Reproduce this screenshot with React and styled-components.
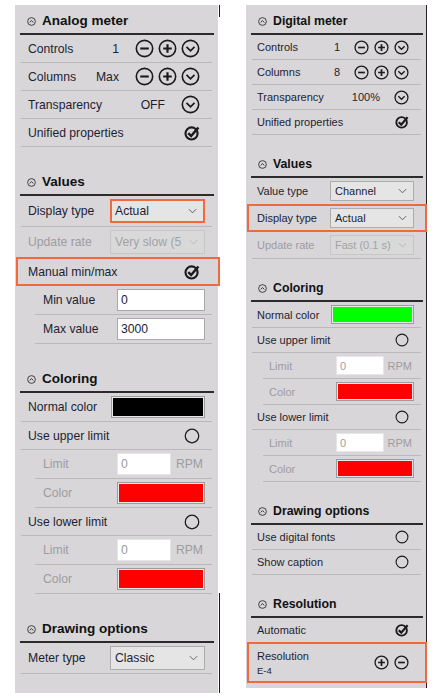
import React from 'react';
import styled, { createGlobalStyle, css } from 'styled-components';

// ---------------------------------------------------------------------------
// global
// ---------------------------------------------------------------------------
const GlobalStyle = createGlobalStyle`
  html, body {
    margin: 0;
    padding: 0;
    background: #ffffff;
  }
  body {
    font-family: "Liberation Sans", Arial, sans-serif;
    color: #1e1e32;
  }
  * { box-sizing: border-box; }
`;

const ORANGE = '#ef6b3c';
const INK = '#1a1a1a';

// ---------------------------------------------------------------------------
// layout
// ---------------------------------------------------------------------------
const Page = styled.div`
  display: flex;
  align-items: flex-start;
  gap: 28px;
  padding: 5px 0 0 15px;
`;

// sizes are kept in css variables so the compact (right) panel only swaps values
const Panel = styled.div`
  --fs: 12.2px;
  --hfs: 13.5px;
  --row: 28px;
  --pad-y: 3px;
  --pad-l: 7px;
  --pad-r: 7px;
  --ctl: 95px;
  --ctl-in: 88px;
  --ctl-h: 24px;
  --box-h: 22px;
  --limit-w: 54px;
  --icon: 19px;
  --check: 16px;
  --gap: 19px;
  --indent: 14px;
  --val-gap: 16px;

  ${(p) =>
    p.$compact &&
    css`
      --fs: 11px;
      --hfs: 12.3px;
      --row: 25px;
      --pad-y: 3px;
      --pad-l: 5px;
      --pad-r: 7px;
      --ctl: 84px;
      --ctl-in: 78px;
      --ctl-h: 20px;
      --box-h: 19px;
      --limit-w: 48px;
      --icon: 15px;
      --check: 14px;
      --gap: 13px;
      --indent: 11px;
      --val-gap: 14px;
    `}

  position: relative;
  width: ${(p) => (p.$compact ? '181px' : '203px')};
  background: #d8d6d9;
  padding: 0 ${(p) => (p.$compact ? '5px' : '6px')}
    ${(p) => (p.$compact ? '5px' : '19px')} 6px;
  font-size: var(--fs);
  border-right: ${(p) => (p.$compact ? '1px solid #222' : 'none')};

  ${(p) =>
    !p.$compact &&
    css`
      &::before,
      &::after {
        content: '';
        position: absolute;
        right: -2px;
        width: 1.5px;
        background: #1a1a1a;
      }
      &::before {
        top: 0;
        height: 12px;
      }
      &::after {
        bottom: 0;
        height: 100px;
      }
    `}
`;

const Section = styled.section`
  & + & {
    margin-top: var(--gap);
  }
`;

const Header = styled.div`
  display: flex;
  align-items: flex-end;
  gap: 6px;
  height: 30px;
  margin: 0 -2px 0 -1px;
  padding: 0 0 4px 7px;
  border-bottom: 2px solid #2b2b2b;
  font-size: var(--hfs);
  font-weight: bold;
  line-height: 16px;
  color: #111;
`;

const HeaderIconBox = styled.span`
  display: flex;
  align-items: center;
  height: 16px;
`;

const highlightBox = css`
  &::after {
    content: '';
    position: absolute;
    left: -5px;
    right: ${(p) => (p.$compact ? '-6px' : '-8px')};
    top: -1px;
    bottom: -1px;
    border: 2px solid ${ORANGE};
    pointer-events: none;
    z-index: 2;
  }
`;

const Row = styled.div`
  position: relative;
  display: flex;
  align-items: center;
  min-height: ${(p) => (p.$tall ? '40px' : 'var(--row)')};
  padding: var(--pad-y) var(--pad-r) var(--pad-y) var(--pad-l);
  margin-left: ${(p) => (p.$indent ? 'var(--indent)' : '0')};
  border-bottom: 1px solid #bab8bb;
  ${(p) => p.$highlight && highlightBox}
`;

const Label = styled.span`
  flex: 1;
  white-space: nowrap;
  color: ${(p) => (p.$muted ? '#9d9c9f' : '#1e1e32')};
  padding-left: ${(p) => (p.$indent ? '1px' : '0')};
`;

const LabelStack = styled.div`
  flex: 1;
  display: flex;
  flex-direction: column;
  gap: 3px;
  color: #1e1e32;
`;

const SubLabel = styled.span`
  font-size: 9.5px;
`;

const Value = styled.span`
  margin-right: var(--val-gap);
  white-space: nowrap;
`;

const IconGroup = styled.div`
  display: flex;
  align-items: center;
  gap: ${(p) => (p.$compact ? '5px' : '4px')};
  margin-right: 5px;
`;

const SelectBox = styled.div`
  display: flex;
  align-items: center;
  justify-content: space-between;
  width: var(--ctl);
  height: var(--ctl-h);
  padding: 0 6px 0 4px;
  background: ${(p) => (p.$disabled ? '#d9d9d9' : '#e5e5e5')};
  border: 1px solid ${(p) => (p.$disabled ? '#c6c6c6' : '#adadad')};
  color: ${(p) => (p.$disabled ? '#a3a3a6' : '#1e1e32')};
  white-space: nowrap;
  ${(p) =>
    p.$highlight &&
    css`
      border: 2px solid ${ORANGE};
      padding-left: 3px;
    `}
`;

const SelectText = styled.span``;

const TextBox = styled.div`
  display: flex;
  align-items: center;
  width: ${(p) => p.$width || 'var(--ctl-in)'};
  height: var(--box-h);
  padding-left: 3px;
  background: #ffffff;
  border: 1px solid ${(p) => (p.$muted ? '#e6e6e6' : '#a8a8a8')};
  color: ${(p) => (p.$muted ? '#9d9c9f' : '#1e1e32')};
`;

const Swatch = styled.div`
  width: ${(p) => (p.$indent ? 'var(--ctl-in)' : 'calc(var(--ctl) - 1px)')};
  height: var(--box-h);
  background: ${(p) => p.$color};
  border: 1px solid #9c9c9c;
  box-shadow: inset 0 0 0 1px #e8e8e8;
`;

const LimitGroup = styled.div`
  display: flex;
  align-items: center;
  justify-content: space-between;
  width: var(--ctl-in);
`;

const Unit = styled.span`
  color: #9d9c9f;
  padding-right: 2px;
`;

// ---------------------------------------------------------------------------
// icons
// ---------------------------------------------------------------------------
const Svg = styled.svg`
  display: block;
  width: ${(p) => p.$size || 'var(--icon)'};
  height: ${(p) => p.$h || p.$size || 'var(--icon)'};
  flex-shrink: 0;
`;

const CollapseIcon = ({ size }) => (
  <Svg viewBox="0 0 10 10" $size={size}>
    <circle cx="5" cy="5" r="4.3" fill="none" stroke="#222" strokeWidth="0.9" />
    <path d="M3 6 L5 4 L7 6" fill="none" stroke="#222" strokeWidth="1" />
  </Svg>
);

const MinusIcon = () => (
  <Svg viewBox="0 0 20 20">
    <circle cx="10" cy="10" r="8.6" fill="none" stroke={INK} strokeWidth="1.7" />
    <path d="M5.5 10 H14.5" stroke={INK} strokeWidth="2.2" />
  </Svg>
);

const PlusIcon = () => (
  <Svg viewBox="0 0 20 20">
    <circle cx="10" cy="10" r="8.6" fill="none" stroke={INK} strokeWidth="1.7" />
    <path d="M5.5 10 H14.5 M10 5.5 V14.5" stroke={INK} strokeWidth="2.3" />
  </Svg>
);

const DownIcon = () => (
  <Svg viewBox="0 0 20 20">
    <circle cx="10" cy="10" r="8.6" fill="none" stroke={INK} strokeWidth="1.7" />
    <path d="M5.8 8.2 L10 12.4 L14.2 8.2" fill="none" stroke={INK} strokeWidth="1.8" />
  </Svg>
);

const CheckIcon = () => (
  <Svg viewBox="0 0 18 18" $size="var(--check)">
    <circle cx="8.5" cy="9.5" r="6.8" fill="none" stroke={INK} strokeWidth="2.4" />
    <path d="M4.8 9.2 L8 12.4 L16.2 2.8" fill="none" stroke={INK} strokeWidth="2.8" />
  </Svg>
);

const RadioIcon = () => (
  <Svg viewBox="0 0 18 18" $size="var(--check)">
    <circle cx="9" cy="9" r="7.6" fill="none" stroke={INK} strokeWidth="1.4" />
  </Svg>
);

const SelectChevron = ({ muted }) => (
  <Svg viewBox="0 0 10 6" $size="9px" $h="6px">
    <path
      d="M1 1 L5 5 L9 1"
      fill="none"
      stroke={muted ? '#b5b5b5' : '#555'}
      strokeWidth="1"
    />
  </Svg>
);

// ---------------------------------------------------------------------------
// pieces
// ---------------------------------------------------------------------------
const SectionHeader = ({ title }) => (
  <Header>
    <HeaderIconBox>
      <CollapseIcon size="9px" />
    </HeaderIconBox>
    {title}
  </Header>
);

const Select = ({ value, disabled, highlight }) => (
  <SelectBox $disabled={disabled} $highlight={highlight}>
    <SelectText>{value}</SelectText>
    <SelectChevron muted={disabled} />
  </SelectBox>
);

const Stepper = ({ compact, withSteps = true }) => (
  <IconGroup $compact={compact}>
    {withSteps && <MinusIcon />}
    {withSteps && <PlusIcon />}
    <DownIcon />
  </IconGroup>
);

const LimitRows = () => (
  <>
    <Row $indent>
      <Label $muted $indent>Limit</Label>
      <LimitGroup>
        <TextBox $width="var(--limit-w)" $muted>0</TextBox>
        <Unit>RPM</Unit>
      </LimitGroup>
    </Row>
    <Row $indent>
      <Label $muted $indent>Color</Label>
      <Swatch $indent $color="#ff0000" />
    </Row>
  </>
);

const TopRows = ({ compact, columns, transparency }) => (
  <>
    <Row>
      <Label>Controls</Label>
      <Value>1</Value>
      <Stepper compact={compact} />
    </Row>
    <Row>
      <Label>Columns</Label>
      <Value>{columns}</Value>
      <Stepper compact={compact} />
    </Row>
    <Row>
      <Label>Transparency</Label>
      <Value>{transparency}</Value>
      <Stepper compact={compact} withSteps={false} />
    </Row>
    <Row>
      <Label>Unified properties</Label>
      <IconGroup>
        <CheckIcon />
      </IconGroup>
    </Row>
  </>
);

// ---------------------------------------------------------------------------
// panels
// ---------------------------------------------------------------------------
const AnalogPanel = () => (
  <Panel>
    <Section>
      <SectionHeader title="Analog meter" />
      <TopRows columns="Max" transparency="OFF" />
    </Section>

    <Section>
      <SectionHeader title="Values" />
      <Row>
        <Label>Display type</Label>
        <Select value="Actual" highlight />
      </Row>
      <Row>
        <Label $muted>Update rate</Label>
        <Select value="Very slow (5" disabled />
      </Row>
      <Row $highlight>
        <Label>Manual min/max</Label>
        <IconGroup>
          <CheckIcon />
        </IconGroup>
      </Row>
      <Row $indent>
        <Label $indent>Min value</Label>
        <TextBox>0</TextBox>
      </Row>
      <Row $indent>
        <Label $indent>Max value</Label>
        <TextBox>3000</TextBox>
      </Row>
    </Section>

    <Section>
      <SectionHeader title="Coloring" />
      <Row>
        <Label>Normal color</Label>
        <Swatch $color="#000000" />
      </Row>
      <Row>
        <Label>Use upper limit</Label>
        <IconGroup>
          <RadioIcon />
        </IconGroup>
      </Row>
      <LimitRows />
      <Row>
        <Label>Use lower limit</Label>
        <IconGroup>
          <RadioIcon />
        </IconGroup>
      </Row>
      <LimitRows />
    </Section>

    <Section>
      <SectionHeader title="Drawing options" />
      <Row>
        <Label>Meter type</Label>
        <Select value="Classic" />
      </Row>
    </Section>
  </Panel>
);

const DigitalPanel = () => (
  <Panel $compact>
    <Section>
      <SectionHeader title="Digital meter" />
      <TopRows compact columns="8" transparency="100%" />
    </Section>

    <Section>
      <SectionHeader title="Values" />
      <Row>
        <Label>Value type</Label>
        <Select value="Channel" />
      </Row>
      <Row $highlight $compact>
        <Label>Display type</Label>
        <Select value="Actual" />
      </Row>
      <Row>
        <Label $muted>Update rate</Label>
        <Select value="Fast (0.1 s)" disabled />
      </Row>
    </Section>

    <Section>
      <SectionHeader title="Coloring" />
      <Row>
        <Label>Normal color</Label>
        <Swatch $color="#00ff00" />
      </Row>
      <Row>
        <Label>Use upper limit</Label>
        <IconGroup>
          <RadioIcon />
        </IconGroup>
      </Row>
      <LimitRows />
      <Row>
        <Label>Use lower limit</Label>
        <IconGroup>
          <RadioIcon />
        </IconGroup>
      </Row>
      <LimitRows />
    </Section>

    <Section>
      <SectionHeader title="Drawing options" />
      <Row>
        <Label>Use digital fonts</Label>
        <IconGroup>
          <RadioIcon />
        </IconGroup>
      </Row>
      <Row>
        <Label>Show caption</Label>
        <IconGroup>
          <RadioIcon />
        </IconGroup>
      </Row>
    </Section>

    <Section>
      <SectionHeader title="Resolution" />
      <Row>
        <Label>Automatic</Label>
        <IconGroup>
          <CheckIcon />
        </IconGroup>
      </Row>
      <Row $highlight $compact $tall>
        <LabelStack>
          <span>Resolution</span>
          <SubLabel>E-4</SubLabel>
        </LabelStack>
        <IconGroup $compact>
          <PlusIcon />
          <MinusIcon />
        </IconGroup>
      </Row>
    </Section>
  </Panel>
);

export default function App() {
  return (
    <>
      <GlobalStyle />
      <Page>
        <AnalogPanel />
        <DigitalPanel />
      </Page>
    </>
  );
}
